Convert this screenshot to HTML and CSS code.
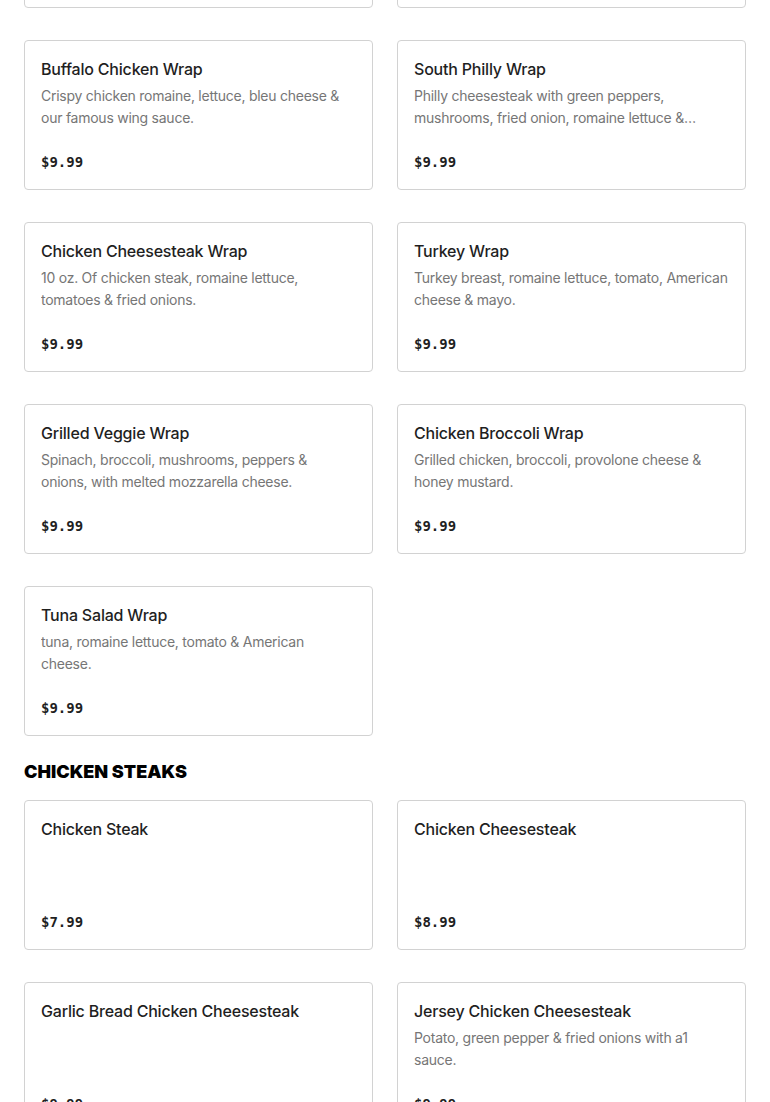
FILE: index.html
```html
<!DOCTYPE html>
<html lang="en">
<head>
<meta charset="utf-8">
<title>Menu</title>
<link rel="stylesheet" href="styles.css">
</head>
<body>
<main class="menu">
  <section class="section section-cut">
    <div class="grid">
      <article class="card"><h3 class="card-title">Chicken Caesar Wrap</h3><p class="card-desc">Grilled chicken, romaine lettuce, parmesan cheese &amp; caesar dressing.</p><div class="card-price">$9.99</div></article>
      <article class="card"><h3 class="card-title">Chipotle Chicken Wrap</h3><p class="card-desc">Grilled chicken, romaine lettuce, tomato &amp; chipotle mayo.</p><div class="card-price">$9.99</div></article>
      <article class="card"><h3 class="card-title">Buffalo Chicken Wrap</h3><p class="card-desc">Crispy chicken romaine, lettuce, bleu cheese &amp; our famous wing sauce.</p><div class="card-price">$9.99</div></article>
      <article class="card"><h3 class="card-title">South Philly Wrap</h3><p class="card-desc">Philly cheesesteak with green peppers, mushrooms, fried onion, romaine lettuce &amp; american cheese.</p><div class="card-price">$9.99</div></article>
      <article class="card"><h3 class="card-title">Chicken Cheesesteak Wrap</h3><p class="card-desc">10 oz. Of chicken steak, romaine lettuce, tomatoes &amp; fried onions.</p><div class="card-price">$9.99</div></article>
      <article class="card"><h3 class="card-title">Turkey Wrap</h3><p class="card-desc">Turkey breast, romaine lettuce, tomato, American cheese &amp; mayo.</p><div class="card-price">$9.99</div></article>
      <article class="card"><h3 class="card-title">Grilled Veggie Wrap</h3><p class="card-desc">Spinach, broccoli, mushrooms, peppers &amp; onions, with melted mozzarella cheese.</p><div class="card-price">$9.99</div></article>
      <article class="card"><h3 class="card-title">Chicken Broccoli Wrap</h3><p class="card-desc">Grilled chicken, broccoli, provolone cheese &amp; honey mustard.</p><div class="card-price">$9.99</div></article>
      <article class="card"><h3 class="card-title">Tuna Salad Wrap</h3><p class="card-desc">tuna, romaine lettuce, tomato &amp; American cheese.</p><div class="card-price">$9.99</div></article>
    </div>
  </section>
  <section class="section">
    <h2 class="section-title">CHICKEN STEAKS</h2>
    <div class="grid">
      <article class="card"><h3 class="card-title">Chicken Steak</h3><div class="card-price">$7.99</div></article>
      <article class="card"><h3 class="card-title">Chicken Cheesesteak</h3><div class="card-price">$8.99</div></article>
      <article class="card"><h3 class="card-title">Garlic Bread Chicken Cheesesteak</h3><div class="card-price">$9.99</div></article>
      <article class="card"><h3 class="card-title">Jersey Chicken Cheesesteak</h3><p class="card-desc">Potato, green pepper &amp; fried onions with a1 sauce.</p><div class="card-price">$9.99</div></article>
    </div>
  </section>
</main>
</body>
</html>
```
FILE: styles.css
```css
* { box-sizing: border-box; }
html, body { margin: 0; padding: 0; background: #fff; }
body { font-family: Inter, "Liberation Sans", sans-serif; color: #1f1f1f; overflow: hidden; }
.menu { padding: 0 24px; }
.section-cut { margin-top: -142px; }
.section { margin-bottom: 24px; }
.section-title {
  margin: 0 0 16px;
  font-size: 18px;
  line-height: 24px;
  font-weight: 900;
  color: #000;
  letter-spacing: 0;
}
.grid {
  display: grid;
  grid-template-columns: 1fr 1fr;
  column-gap: 24px;
  row-gap: 32px;
}
.card {
  height: 150px;
  border: 1px solid #d2d2d2;
  border-radius: 4px;
  padding: 16px 16px 17px;
  display: flex;
  flex-direction: column;
  background: #fff;
}
.card-title {
  margin: 0 0 4px;
  font-size: 16px;
  line-height: 24px;
  font-weight: 500;
  letter-spacing: -0.2px;
  color: #1f1f1f;
}
.card-desc {
  margin: 0;
  font-size: 14px;
  line-height: 22px;
  letter-spacing: -0.25px;
  color: #767676;
  display: -webkit-box;
  -webkit-line-clamp: 2;
  -webkit-box-orient: vertical;
  overflow: hidden;
}
.card-price {
  margin-top: auto;
  font-family: "DejaVu Sans Mono", "Liberation Mono", monospace;
  font-weight: 700;
  font-size: 14px;
  line-height: 20px;
  color: #1f1f1f;
}
```
